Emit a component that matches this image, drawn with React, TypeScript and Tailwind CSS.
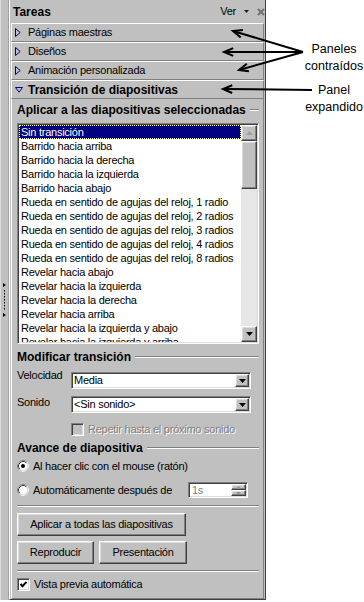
import React from "react";

const transitions = [
  "Sin transición",
  "Barrido hacia arriba",
  "Barrido hacia la derecha",
  "Barrido hacia la izquierda",
  "Barrido hacia abajo",
  "Rueda en sentido de agujas del reloj, 1 radio",
  "Rueda en sentido de agujas del reloj, 2 radios",
  "Rueda en sentido de agujas del reloj, 3 radios",
  "Rueda en sentido de agujas del reloj, 4 radios",
  "Rueda en sentido de agujas del reloj, 8 radios",
  "Revelar hacia abajo",
  "Revelar hacia la izquierda",
  "Revelar hacia la derecha",
  "Revelar hacia arriba",
  "Revelar hacia la izquierda y abajo",
  "Revelar hacia la izquierda y arriba",
];

const sunken =
  "border border-t-[#808080] border-l-[#808080] border-b-white border-r-white shadow-[inset_1px_1px_0_#404040,inset_-1px_-1px_0_#dcdcdc]";
const raised =
  "border border-t-white border-l-white border-b-[#404040] border-r-[#404040] shadow-[inset_-1px_-1px_0_#808080,inset_1px_1px_0_#dcdcdc]";

function DownTri({ color = "#000" }: { color?: string }) {
  return (
    <svg width="7" height="4" viewBox="0 0 7 4">
      <path d="M0 0h7L3.5 4z" fill={color} />
    </svg>
  );
}

function UpTri({ color = "#000" }: { color?: string }) {
  return (
    <svg width="7" height="4" viewBox="0 0 7 4">
      <path d="M0 4h7L3.5 0z" fill={color} />
    </svg>
  );
}

function Etch({ className = "" }: { className?: string }) {
  return <div className={`h-[2px] border-t border-t-[#808080] border-b border-b-white ${className}`} />;
}

function GroupHeader({ label, className = "" }: { label: string; className?: string }) {
  return (
    <div className={`flex items-center h-[16px] ${className}`}>
      <span className="font-bold text-[12px] tracking-normal whitespace-nowrap">{label}</span>
      <Etch className="flex-1 ml-[4px]" />
    </div>
  );
}

function Combo({ value }: { value: string }) {
  return (
    <div className={`w-[180px] h-[17px] bg-white flex items-center p-[1px] ${sunken}`}>
      <span className="flex-1 pl-[1px] leading-[13px]">{value}</span>
      <div className={`w-[14px] h-[13px] bg-[#c0c0c0] flex items-center justify-center ${raised}`}>
        <DownTri />
      </div>
    </div>
  );
}

function Radio({ checked }: { checked?: boolean }) {
  return (
    <svg width="12" height="12" viewBox="0 0 12 12" className="shrink-0">
      <circle cx="6" cy="6" r="5.5" fill="#fff" stroke="#808080" />
      <path d="M2.11 9.89 A5.5 5.5 0 0 0 9.89 2.11" stroke="#fff" fill="none" />
      <path d="M2.82 9.18 A4.5 4.5 0 0 1 9.18 2.82" stroke="#404040" fill="none" />
      <path d="M2.82 9.18 A4.5 4.5 0 0 0 9.18 2.82" stroke="#dcdcdc" fill="none" />
      {checked && <circle cx="6" cy="6" r="2" fill="#000" />}
    </svg>
  );
}

function Check({ checked, disabled }: { checked?: boolean; disabled?: boolean }) {
  return (
    <div
      className={`w-[13px] h-[13px] shrink-0 flex items-center justify-center ${sunken} ${
        disabled ? "bg-[#c0c0c0]" : "bg-white"
      }`}
    >
      {checked && (
        <svg width="9" height="9" viewBox="0 0 9 9">
          <polyline points="1.5,4 3.5,6.2 7.5,1.8" fill="none" stroke="#000" strokeWidth="2" />
        </svg>
      )}
    </div>
  );
}

function Button({ label, w }: { label: string; w: string }) {
  return (
    <div className={`${w} h-[23px] bg-[#c0c0c0] flex items-center justify-center ${raised}`}>{label}</div>
  );
}

function CollapsedRow({ label }: { label: string }) {
  return (
    <div className="mx-[1px] h-[19px] flex items-center border border-t-white border-l-white border-b-[#808080] border-r-[#808080]">
      <svg width="6" height="9" viewBox="0 0 6 9" className="ml-[3px]">
        <polygon points="0.5,0.5 5.2,4.5 0.5,8.5" fill="#c0c0c0" stroke="#000080" />
      </svg>
      <span className="ml-[7px]">{label}</span>
    </div>
  );
}

function Arrow({ x1, y1, x2, y2 }: { x1: number; y1: number; x2: number; y2: number }) {
  const a = Math.atan2(y2 - y1, x2 - x1);
  const L = 10;
  const w = 0.4;
  const p1 = `${x2 - L * Math.cos(a - w)},${y2 - L * Math.sin(a - w)}`;
  const p2 = `${x2 - L * Math.cos(a + w)},${y2 - L * Math.sin(a + w)}`;
  return (
    <g stroke="#000" strokeWidth="2" fill="none">
      <line x1={x1} y1={y1} x2={x2} y2={y2} />
      <polyline points={`${p1} ${x2},${y2} ${p2}`} />
    </g>
  );
}

function Scrollbar() {
  return (
    <div className="w-[16px] flex flex-col">
      <div className={`h-[16px] bg-[#c0c0c0] flex items-center justify-center ${raised}`}>
        <UpTri color="#a0a0a0" />
      </div>
      <div className={`h-[48px] bg-[#c0c0c0] ${raised}`} />
      <div className="flex-1 bg-[#e6e6e6]" />
      <div className={`h-[16px] bg-[#c0c0c0] flex items-center justify-center ${raised}`}>
        <DownTri />
      </div>
    </div>
  );
}

export default function App() {
  return (
    <div className="relative w-[364px] h-[602px] bg-white overflow-hidden font-['Liberation_Sans',Arial,sans-serif] text-[11px] tracking-[-0.25px] text-black">
      <div className="flex w-[266px] h-[600px] bg-[#c0c0c0]">
        {/* grip */}
        <div className="w-[9px] h-full flex items-center justify-center border-l border-l-[#dcdcdc] border-r border-r-[#a0a0a0]">
          <svg width="3" height="34" viewBox="0 0 3 34">
            <polygon points="0,0 3,2 0,4" fill="#000" />
            {[7, 10, 13, 16, 19, 22, 25].map((y) => (
              <rect key={y} x="1" y={y} width="1" height="1.5" fill="#000" />
            ))}
            <polygon points="0,30 3,32 0,34" fill="#000" />
          </svg>
        </div>

        {/* task pane */}
        <div className="flex-1 flex flex-col border-l border-l-white border-r border-r-[#404040] border-b border-b-[#404040]">
          <div className="h-[23px] flex items-center pl-[3px]">
            <span className="font-bold text-[12px] tracking-normal">Tareas</span>
            <span className="ml-auto">Ver</span>
            <span className="ml-[8px] flex">
              <svg width="5" height="3" viewBox="0 0 5 3">
                <path d="M0 0h5L2.5 3z" fill="#202020" />
              </svg>
            </span>
            <svg width="8" height="8" viewBox="0 0 8 8" className="ml-[8px]">
              <path d="M1 1L7 7M7 1L1 7" stroke="#707070" strokeWidth="2" />
            </svg>
          </div>

          <CollapsedRow label="Páginas maestras" />
          <CollapsedRow label="Diseños" />
          <CollapsedRow label="Animación personalizada" />
          <div className="mx-[1px] h-[19px] flex items-center border border-t-white border-l-white border-b-[#808080] border-r-[#808080]">
            <svg width="8" height="6" viewBox="0 0 8 6" className="ml-[3px]">
              <polygon points="0.5,0.5 7.5,0.5 4,5.2" fill="#c0c0c0" stroke="#000080" />
            </svg>
            <span className="ml-[5px] font-bold text-[12px] tracking-normal">Transición de diapositivas</span>
          </div>

          <div className="mx-[1px] flex-1 flex flex-col pt-[3px] pl-[5px] pr-[4px] border-l border-l-white border-r border-r-[#808080] border-b border-b-[#808080]">
            <GroupHeader label="Aplicar a las diapositivas seleccionadas" />

            <div className={`mt-[5px] h-[221px] w-[242px] bg-white flex p-[1px] ${sunken}`}>
              <div className="flex-1 overflow-hidden">
                {transitions.map((t, i) => (
                  <div
                    key={t}
                    className={`h-[14px] leading-[12px] whitespace-nowrap border ${
                      i === 0
                        ? "bg-[#000080] text-white border-dotted border-[#ffff80]"
                        : "border-transparent"
                    } pl-[1px]`}
                  >
                    {t}
                  </div>
                ))}
              </div>
              <Scrollbar />
            </div>

            <GroupHeader label="Modificar transición" className="mt-[5px]" />

            <div className="mt-[3px] flex items-start">
              <span className="w-[54px] leading-[14px]">Velocidad</span>
              <div className="mt-[4px]">
                <Combo value="Media" />
              </div>
            </div>
            <div className="mt-[6px] flex items-start">
              <span className="w-[54px] leading-[14px]">Sonido</span>
              <div className="mt-[1px]">
                <Combo value="<Sin sonido>" />
              </div>
            </div>

            <div className="mt-[9px] h-[14px] flex items-center pl-[54px] gap-[4px]">
              <Check disabled />
              <span className="text-[#808080] [text-shadow:1px_1px_0_#fff]">Repetir hasta el próximo sonido</span>
            </div>

            <GroupHeader label="Avance de diapositiva" className="mt-[4px]" />

            <div className="mt-[3px] h-[14px] flex items-center gap-[4px]">
              <Radio checked />
              <span>Al hacer clic con el mouse (ratón)</span>
            </div>

            <div className="mt-[9px] h-[16px] flex items-center gap-[4px]">
              <Radio />
              <span className="w-[151px] whitespace-nowrap">Automáticamente después de</span>
              <div className={`w-[60px] h-[16px] bg-white flex p-[1px] ${sunken}`}>
                <span className="flex-1 pl-[2px] leading-[12px] text-[#808080]">1s</span>
                <div className="w-[15px] flex flex-col">
                  <div className={`h-[6px] flex-1 bg-[#c0c0c0] flex items-center justify-center ${raised}`}>
                    <svg width="5" height="3" viewBox="0 0 5 3">
                      <path d="M0 3h5L2.5 0z" fill="#909090" />
                    </svg>
                  </div>
                  <div className={`h-[6px] flex-1 bg-[#c0c0c0] flex items-center justify-center ${raised}`}>
                    <svg width="5" height="3" viewBox="0 0 5 3">
                      <path d="M0 0h5L2.5 3z" fill="#909090" />
                    </svg>
                  </div>
                </div>
              </div>
            </div>

            <Etch className="mt-[7px]" />

            <div className="mt-[6px] flex">
              <Button label="Aplicar a todas las diapositivas" w="w-[169px]" />
            </div>
            <div className="mt-[5px] flex gap-[5px]">
              <Button label="Reproducir" w="w-[77px]" />
              <Button label="Presentación" w="w-[88px]" />
            </div>

            <Etch className="mt-[6px]" />

            <div className="mt-[5px] h-[14px] flex items-center gap-[4px]">
              <Check checked />
              <span>Vista previa automática</span>
            </div>
          </div>
        </div>
      </div>

      {/* callouts */}
      <svg className="absolute inset-0 pointer-events-none" width="364" height="602">
        <Arrow x1={303} y1={52} x2={233} y2={31} />
        <Arrow x1={303} y1={52} x2={224} y2={52} />
        <Arrow x1={303} y1={52} x2={239} y2={70} />
        <Arrow x1={312} y1={90} x2={223} y2={89} />
      </svg>
      <div className="absolute left-[304px] top-[41px] w-[60px] text-center text-[12.5px] leading-[17px] tracking-normal">
        Paneles
        <br />
        contraídos
      </div>
      <div className="absolute left-[304px] top-[82px] w-[60px] text-center text-[12.5px] leading-[17px] tracking-normal">
        Panel
        <br />
        expandido
      </div>
    </div>
  );
}
